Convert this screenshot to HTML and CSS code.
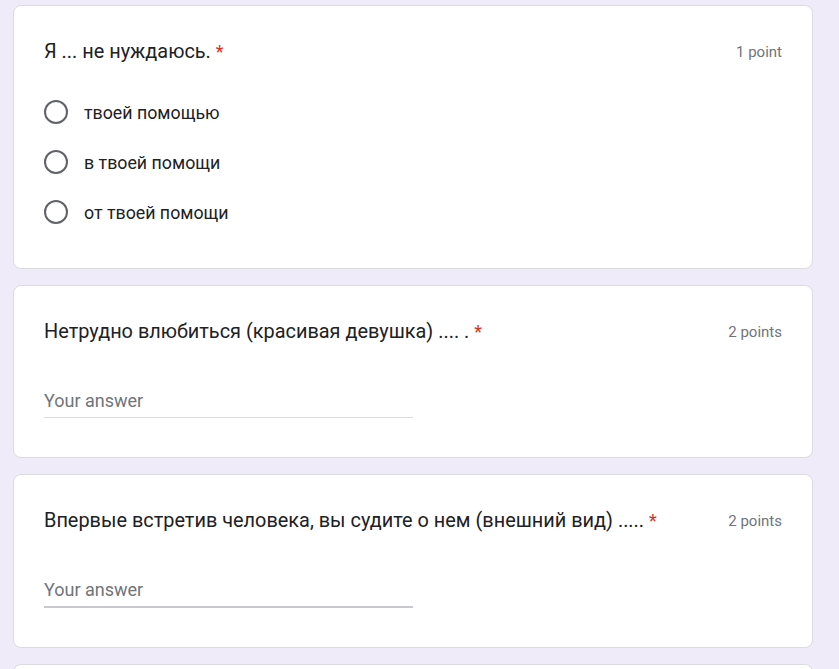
FILE: index.html
```html
<!DOCTYPE html>
<html lang="ru">
<head>
<meta charset="utf-8">
<title>Form</title>
<link rel="stylesheet" href="styles.css">
</head>
<body>
<div class="form">
  <div class="card card-choice">
    <div class="q-head">
      <div class="q-title">Я ... не нуждаюсь. <span class="req">*</span></div>
      <div class="q-points">1 point</div>
    </div>
    <div class="options">
      <label class="option"><span class="radio"></span><span class="opt-text">твоей помощью</span></label>
      <label class="option"><span class="radio"></span><span class="opt-text">в твоей помощи</span></label>
      <label class="option"><span class="radio"></span><span class="opt-text">от твоей помощи</span></label>
    </div>
  </div>

  <div class="card card-text">
    <div class="q-head">
      <div class="q-title">Нетрудно влюбиться (красивая девушка) .... . <span class="req">*</span></div>
      <div class="q-points">2 points</div>
    </div>
    <div class="answer"><span class="placeholder">Your answer</span></div>
  </div>

  <div class="card card-text">
    <div class="q-head">
      <div class="q-title">Впервые встретив человека, вы судите о нем (внешний вид) ..... <span class="req">*</span></div>
      <div class="q-points">2 points</div>
    </div>
    <div class="answer answer-strong"><span class="placeholder">Your answer</span></div>
  </div>

  <div class="card card-next"></div>
</div>
</body>
</html>
```

FILE: styles.css
```css
html, body {
  margin: 0;
  padding: 0;
  background: #f0ebf8;
  font-family: Roboto, "Noto Sans", sans-serif;
  color: #202124;
}

.form {
  display: flex;
  flex-direction: column;
  gap: 16px;
  padding: 5px 0 0 13px;
  width: 800px;
}

.card {
  box-sizing: border-box;
  width: 800px;
  background: #fff;
  border: 1px solid #dadce0;
  border-radius: 8px;
  padding: 34px 30px 31px 30px;
}

.card-text {
  padding-bottom: 39px;
}

.card-next {
  height: 60px;
  padding: 0;
}

.q-head {
  display: flex;
  justify-content: space-between;
  align-items: center;
  height: 24px;
}

.q-title {
  font-size: 19.9px;
  line-height: 24px;
  color: #202124;
  white-space: nowrap;
}

.req {
  color: #d93025;
  font-size: 18px;
}

.q-points {
  font-size: 15px;
  line-height: 24px;
  color: #70757a;
}

.options {
  display: flex;
  flex-direction: column;
  margin-top: 23px;
}

.option {
  display: flex;
  align-items: center;
  height: 50px;
  gap: 16px;
}

.radio {
  box-sizing: border-box;
  width: 24px;
  height: 24px;
  border: 2px solid #5f6368;
  border-radius: 50%;
}

.opt-text {
  font-size: 17.8px;
  color: #202124;
}

.answer {
  width: 369px;
  margin-top: 45px;
  padding-bottom: 4px;
  border-bottom: 1px solid #dadce0;
}

.answer-strong {
  border-bottom: 2px solid #c8c9cc;
}

.placeholder {
  font-size: 18px;
  line-height: 24px;
  display: block;
  color: #70757a;
}
```
